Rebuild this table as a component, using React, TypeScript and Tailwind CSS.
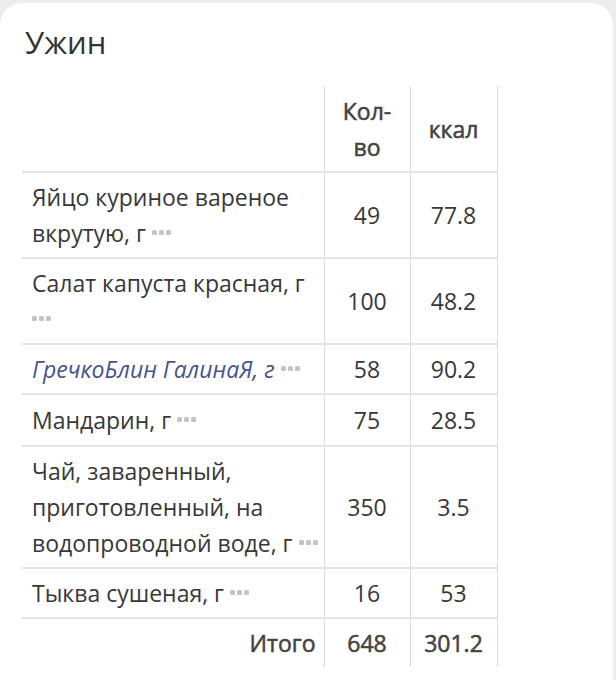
import React from "react";

type Row = { name: string; qty: string; kcal: string; link?: boolean };

const rows: Row[] = [
  { name: "Яйцо куриное вареное вкрутую, г", qty: "49", kcal: "77.8" },
  { name: "Салат капуста красная, г", qty: "100", kcal: "48.2" },
  { name: "ГречкоБлин ГалинаЯ, г", qty: "58", kcal: "90.2", link: true },
  { name: "Мандарин, г", qty: "75", kcal: "28.5" },
  { name: "Чай, заваренный, приготовленный, на водопроводной воде, г", qty: "350", kcal: "3.5" },
  { name: "Тыква сушеная, г", qty: "16", kcal: "53" },
];

function Dots() {
  return (
    <span className="inline-flex items-center gap-[2px] align-middle relative top-[-3px]">
      <span className="block w-[5px] h-[5px] rounded-[1.5px] bg-[#c4c4c4]" />
      <span className="block w-[5px] h-[5px] rounded-[1.5px] bg-[#c4c4c4]" />
      <span className="block w-[5px] h-[5px] rounded-[1.5px] bg-[#c4c4c4]" />
    </span>
  );
}

const strong = "text-[#444] [-webkit-text-stroke:0.55px_#444]";

export default function App() {
  return (
    <div
      className="w-[616px] h-[680px] overflow-hidden bg-[#ededed] pt-[3px]"
      style={{ fontFamily: '"Open Sans", "Noto Sans", sans-serif' }}
    >
      <div className="w-[613px] h-[720px] bg-white rounded-[22px] pt-[19px] pl-[22px]">
        <div className="text-[31px] leading-[40px] text-[#333] pl-[3px]">Ужин</div>
        <table className="mt-[24px] border-collapse table-fixed w-[475px] text-[23px] leading-[36px] text-[#383838]">
          <colgroup>
            <col className="w-[302px]" />
            <col className="w-[86px]" />
            <col className="w-[87px]" />
          </colgroup>
          <thead>
            <tr className="border-b-2 border-[#e4e4e4]">
              <th className="pt-[7px] pb-[6px]"></th>
              <th className={`pt-[7px] pb-[6px] px-[2px] font-normal text-center border-l border-[#dadada] ${strong}`}>
                Кол-
                <br />
                во
              </th>
              <th className={`pt-[7px] pb-[6px] px-[2px] font-normal text-center border-l border-r border-[#dadada] ${strong}`}>
                ккал
              </th>
            </tr>
          </thead>
          <tbody>
            {rows.map((r) => (
              <tr key={r.name} className="border-b-2 border-[#e4e4e4]">
                <td className={`${r.name.startsWith("Мандарин") ? "pt-[7px] pb-[7px]" : "py-[6px]"} pl-[10px] pr-[2px] align-middle text-left`}>
                  <span className={r.link ? "italic text-[#45548b]" : ""}>{r.name}</span>{" "}
                  <Dots />
                </td>
                <td className="py-[6px] px-[2px] text-center align-middle border-l border-[#dadada]">{r.qty}</td>
                <td className="py-[6px] px-[2px] text-center align-middle border-l border-r border-[#dadada]">{r.kcal}</td>
              </tr>
            ))}
            <tr>
              <td className={`py-[6px] pl-[10px] pr-[8px] text-right ${strong}`}>Итого</td>
              <td className={`py-[6px] px-[2px] text-center border-l border-[#dadada] ${strong}`}>648</td>
              <td className={`py-[6px] px-[2px] text-center border-l border-r border-[#dadada] ${strong}`}>301.2</td>
            </tr>
          </tbody>
        </table>
      </div>
    </div>
  );
}
